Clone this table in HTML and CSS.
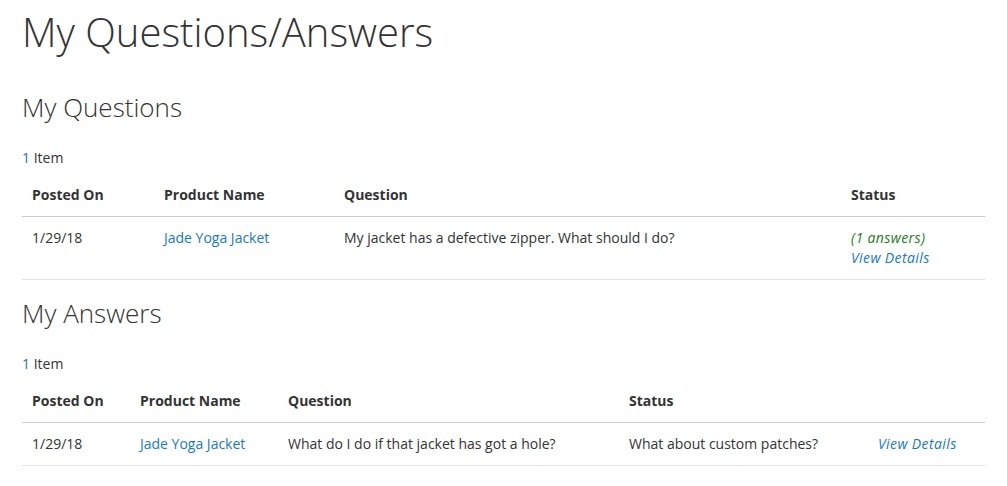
FILE: index.html
```html
<!DOCTYPE html>
<html lang="en">
<head>
<meta charset="utf-8">
<title>My Questions/Answers</title>
<link rel="stylesheet" href="styles.css">
</head>
<body>
<main class="page">
  <h1 class="page-title">My Questions/Answers</h1>

  <section class="block">
    <h2 class="block-title">My Questions</h2>
    <p class="toolbar"><span class="toolbar-number">1</span> Item</p>
    <table class="data-table questions">
      <colgroup>
        <col class="q-c1"><col class="q-c2"><col class="q-c3"><col class="q-c4">
      </colgroup>
      <thead>
        <tr><th>Posted On</th><th>Product Name</th><th>Question</th><th>Status</th></tr>
      </thead>
      <tbody>
        <tr>
          <td>1/29/18</td>
          <td><a href="#" class="link">Jade Yoga Jacket</a></td>
          <td>My jacket has a defective zipper. What should I do?</td>
          <td><em class="answers">(1 answers)</em><br><a href="#" class="link details">View Details</a></td>
        </tr>
      </tbody>
    </table>
  </section>

  <section class="block">
    <h2 class="block-title second">My Answers</h2>
    <p class="toolbar"><span class="toolbar-number">1</span> Item</p>
    <table class="data-table answers-table">
      <colgroup>
        <col class="a-c1"><col class="a-c2"><col class="a-c3"><col class="a-c4"><col class="a-c5">
      </colgroup>
      <thead>
        <tr><th>Posted On</th><th>Product Name</th><th>Question</th><th>Status</th><th></th></tr>
      </thead>
      <tbody>
        <tr>
          <td>1/29/18</td>
          <td><a href="#" class="link">Jade Yoga Jacket</a></td>
          <td>What do I do if that jacket has got a hole?</td>
          <td>What about custom patches?</td>
          <td><a href="#" class="link details">View Details</a></td>
        </tr>
      </tbody>
    </table>
  </section>
</main>
</body>
</html>
```

FILE: styles.css
```css
html, body {
  margin: 0;
  padding: 0;
  background: #fff;
}

body {
  font-family: "Open Sans", "Liberation Sans", sans-serif;
  font-size: 14px;
  line-height: 20px;
  color: #333;
}

.page {
  padding: 10px 22px 0;
}

.page-title {
  margin: 0 0 39px;
  font-weight: 300;
  font-size: 40px;
  line-height: 44px;
  color: #333;
}

.block-title {
  margin: 0 0 26px;
  font-weight: 300;
  font-size: 26px;
  line-height: 29px;
  color: #333;
}

.block-title.second {
  margin-top: 19px;
}

.toolbar {
  margin: 0 0 6px;
}

.toolbar-number {
  color: #2a6ea8;
}

.data-table {
  width: 100%;
  border-collapse: collapse;
  table-layout: fixed;
}

.data-table th {
  text-align: left;
  font-weight: 700;
  padding: 11px 10px;
  border-bottom: 1px solid #ccc;
  vertical-align: top;
}

.data-table td {
  padding: 11px 10px;
  border-bottom: 1px solid #e3e3e3;
  vertical-align: top;
}

.q-c1 { width: 132px; }
.q-c2 { width: 180px; }
.q-c3 { width: 507px; }
.q-c4 { width: 144px; }

.a-c1 { width: 108px; }
.a-c2 { width: 148px; }
.a-c3 { width: 341px; }
.a-c4 { width: 249px; }
.a-c5 { width: 117px; }

.link {
  color: #1979c3;
  text-decoration: none;
}

.details {
  font-style: italic;
  letter-spacing: 0.4px;
}

.answers {
  color: #1a7a1a;
  font-style: italic;
  letter-spacing: 0.4px;
}
```
